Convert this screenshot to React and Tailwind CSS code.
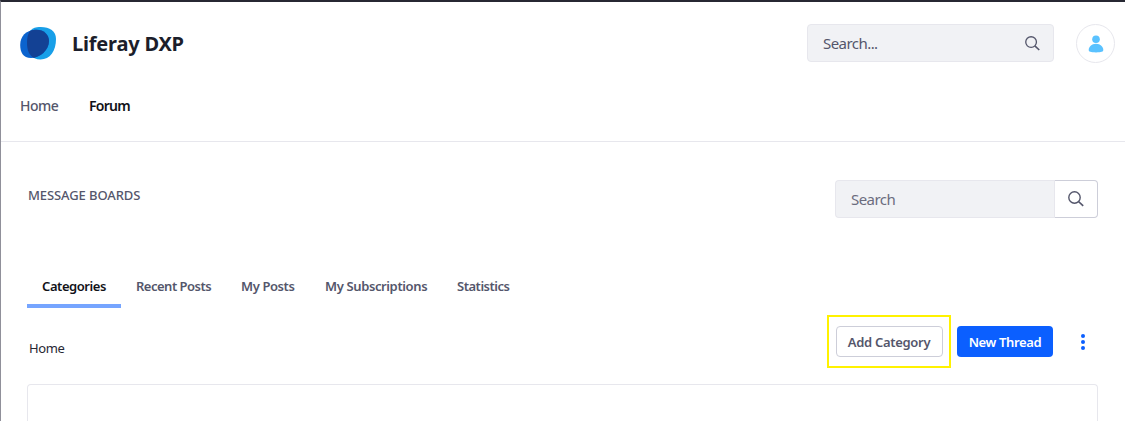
const tabs = [
  { label: 'Recent Posts', box: 'w-[105px] tracking-[-0.5px]' },
  { label: 'My Posts', box: 'w-[84px] tracking-[-0.4px]' },
  { label: 'My Subscriptions', box: 'w-[132px] tracking-[-0.38px]' },
  { label: 'Statistics', box: 'w-[83px] tracking-[-0.48px]' },
];

function SearchIcon({ className }) {
  return (
    <svg viewBox="0 0 16 16" className={className} fill="none" stroke="currentColor" strokeWidth="1.4">
      <circle cx="6.5" cy="6.5" r="5.7" />
      <path d="M10.5 10.5 L15.2 14.9" strokeWidth="1.7" />
    </svg>
  );
}

function Logo() {
  const right = 'M37 27.2 C48 26 56 30 56 39 C56 51 50 59.5 40.5 59.5 C31.5 59.5 27 53 27 43 C27 34 30 28 37 27.2 Z';
  const left = 'M35 29.7 C43 29 49 34 49 41 C49 50 40 58 31 58 C23 58 20.2 52 20.2 45 C20.2 36 26 30.5 35 29.7 Z';
  return (
    <svg viewBox="20 26 36 34" className="h-[34px] w-9">
      <defs>
        <clipPath id="overlap"><path d={left} /></clipPath>
      </defs>
      <path d={right} fill="#189fe8" />
      <path d={left} fill="#0b63ce" />
      <path d={right} fill="#134194" clipPath="url(#overlap)" />
    </svg>
  );
}

export default function App() {
  return (
    <div className="flex h-[421px] w-full flex-col overflow-hidden border-t-2 border-l border-t-[#272833] border-l-[#90909a] bg-white font-['Noto_Sans','Open_Sans',sans-serif] text-sm font-medium whitespace-nowrap text-[#54566b]">
      <header className="h-[140px] shrink-0 border-b border-[#e7e7ed]">
        <div className="flex h-[82px] items-center pr-2.5 pl-[19px]">
          <Logo />
          <h1 className="ml-4 pt-[2px] text-xl font-bold tracking-[-0.2px] text-[#1c1e2b]">Liferay DXP</h1>
          <div className="ml-auto flex h-[38px] w-[247px] items-center justify-between rounded border border-[#e7e7ed] bg-[#f1f2f5] pr-[13px] pl-[15px] text-[15px] font-normal">
            <span className="pt-0.5 tracking-[-0.55px]">Search...</span>
            <SearchIcon className="h-[15px] w-[15px]" />
          </div>
          <div className="ml-[22px] flex h-[39px] w-[39px] items-center justify-center rounded-full border border-[#e7e7ed]">
            <svg viewBox="0 0 16 18" className="mt-0.5 h-[18px] w-4 fill-[#5ac2ff]">
              <circle cx="8" cy="4.3" r="3.8" />
              <path d="M8 8.8 C12.5 8.8 15.3 12 15.3 15 C15.3 16.8 13.4 17.4 8 17.4 C2.6 17.4 .7 16.8 .7 15 C.7 12 3.5 8.8 8 8.8 Z" />
            </svg>
          </div>
        </div>
        <nav className="flex h-[44px] items-center pl-[19px] tracking-[-0.5px]">
          <a className="w-[69px]">Home</a>
          <a className="font-semibold tracking-[-0.75px] text-[#111218]">Forum</a>
        </nav>
      </header>
      <main className="flex grow flex-col pr-[27px] pl-[26px]">
        <div className="mt-[38px] flex h-[38px] shrink-0 items-center justify-between">
          <h2 className="-mt-2 pl-px text-[13px] tracking-[-0.1px]">MESSAGE BOARDS</h2>
          <div className="flex h-[38px] w-[263px]">
            <div className="flex grow items-center rounded-l border border-r-0 border-[#e7e7ed] bg-[#f1f2f5] pt-0.5 pl-[15px] text-[15px] font-normal tracking-[-0.55px] text-[#6b6c7e]">Search</div>
            <div className="flex w-11 items-center justify-center rounded-r border border-[#cdced9] border-l-[#e7e7ed]">
              <SearchIcon className="h-4 w-4" />
            </div>
          </div>
        </div>
        <nav className="mt-[48px] flex h-[42px] shrink-0 text-[13px] font-semibold">
          <div className="mr-[15px] flex h-[42px] w-[94px] items-center justify-center border-b-4 border-[#76a5ff] pt-0.5 tracking-[-0.45px] text-[#111218]">Categories</div>
          {tabs.map((tab) => (
            <div key={tab.label} className={`flex h-[40px] items-center ${tab.box}`}>{tab.label}</div>
          ))}
        </nav>
        <div className="mt-[7px] flex h-[53px] shrink-0 items-center pl-0.5">
          <span className="mt-3.5 text-[13px] font-normal tracking-[-0.4px] text-[#272833]">Home</span>
          <div className="ml-auto flex h-[53px] w-[124px] items-center justify-center border-2 border-[#fff200]">
            <button className="h-[31px] w-[107px] rounded border border-[#cdced9] pt-px text-[13px] font-semibold tracking-[-0.3px]">Add Category</button>
          </div>
          <button className="ml-[6px] h-[31px] w-24 rounded bg-[#0b5fff] pt-px text-[13px] font-semibold tracking-[-0.35px] text-white">New Thread</button>
          <div className="ml-[21px] flex w-[24px] justify-start pl-[7px]">
            <svg viewBox="0 0 4 16" className="h-4 w-1 fill-[#0b5fff]">
              <circle cx="2" cy="2" r="2" /><circle cx="2" cy="8" r="2" /><circle cx="2" cy="14" r="2" />
            </svg>
          </div>
        </div>
        <section className="mt-[16px] grow rounded-t border border-b-0 border-[#e7e7ed]" />
      </main>
    </div>
  );
}
